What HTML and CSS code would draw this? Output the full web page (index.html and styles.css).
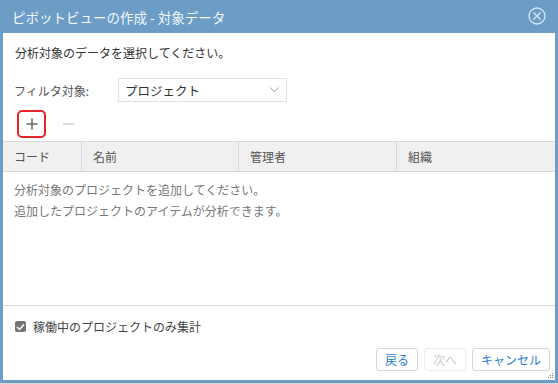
FILE: index.html
```html
<!DOCTYPE html>
<html lang="ja">
<head>
  <meta charset="UTF-8" />
  <meta name="viewport" content="width=device-width, initial-scale=1.0"/>
  <title>ピボットビューの作成</title>
  <link rel="stylesheet" href="styles.css">
</head>
<body>
  <div class="dialog">
    <div class="dialog-title">
      <span>ピボットビューの作成 - 対象データ</span>
      <svg class="close-icon" width="18" height="18" viewBox="0 0 18 18">
        <circle cx="9" cy="9" r="8" fill="none" stroke="#dfe9f3" stroke-width="1.3"/>
        <path d="M5.5 5.5 L12.5 12.5 M12.5 5.5 L5.5 12.5" stroke="#dfe9f3" stroke-width="1.3"/>
      </svg>
    </div>
    <div class="dialog-body">
      <p class="intro">分析対象のデータを選択してください。</p>
      <div class="filter-row">
        <label class="filter-label">フィルタ対象:</label>
        <div class="select">
          <span>プロジェクト</span>
          <svg width="9" height="6" viewBox="0 0 9 6">
            <path d="M0.5 0.5 L4.5 5 L8.5 0.5" fill="none" stroke="#a0a0a0" stroke-width="1"/>
          </svg>
        </div>
      </div>
      <div class="toolbar">
        <div class="icon-btn add-btn">
          <svg width="12" height="12" viewBox="0 0 12 12">
            <path d="M6 0.5 V11.5 M0.5 6 H11.5" stroke="#666" stroke-width="1.5"/>
          </svg>
        </div>
        <div class="icon-btn">
          <svg width="11" height="12" viewBox="0 0 11 12">
            <path d="M0 6 H11" stroke="#cfcfcf" stroke-width="1.5"/>
          </svg>
        </div>
      </div>
      <div class="grid">
        <div class="grid-head">
          <div class="col col-code">コード</div>
          <div class="col">名前</div>
          <div class="col">管理者</div>
          <div class="col">組織</div>
        </div>
        <div class="grid-empty">
          分析対象のプロジェクトを追加してください。<br>
          追加したプロジェクトのアイテムが分析できます。
        </div>
      </div>
      <div class="footer">
        <label class="check-row">
          <span class="checkbox">
            <svg width="9" height="8" viewBox="0 0 9 8">
              <path d="M1 4 L3.5 6.5 L8 1.5" fill="none" stroke="#fff" stroke-width="1.5"/>
            </svg>
          </span>
          稼働中のプロジェクトのみ集計
        </label>
        <div class="actions">
          <button class="btn">戻る</button>
          <button class="btn" disabled>次へ</button>
          <button class="btn">キャンセル</button>
        </div>
      </div>
      <svg class="grip" width="6" height="6" viewBox="0 0 6 6">
        <rect x="4" y="0" width="1" height="1" fill="#777"/>
        <rect x="2" y="2" width="1" height="1" fill="#777"/>
        <rect x="4" y="2" width="1" height="1" fill="#777"/>
        <rect x="0" y="4" width="1" height="1" fill="#777"/>
        <rect x="2" y="4" width="1" height="1" fill="#777"/>
        <rect x="4" y="4" width="1" height="1" fill="#777"/>
      </svg>
    </div>
  </div>
</body>
</html>
```

FILE: styles.css
```css
html, body {
  margin: 0;
  padding: 0;
  background: #d9d9d9;
  font-family: "Noto Sans CJK JP", "DejaVu Sans", sans-serif;
  font-size: 12px;
  color: #333;
}
.dialog {
  width: 558px;
  height: 383px;
  box-sizing: border-box;
  background: #6b9dc6;
  padding: 0 3px 3px 3px;
  display: flex;
  flex-direction: column;
}
.dialog-title {
  height: 33px;
  display: flex;
  align-items: center;
  justify-content: space-between;
  padding: 0 9px 0 9px;
  color: #f5f8fb;
  font-size: 13.5px;
}
.close-icon {
  margin-top: -1px;
}
.dialog-body {
  flex: 1;
  background: #fff;
  display: flex;
  flex-direction: column;
  position: relative;
}
.intro {
  margin: 0;
  padding: 11px 12px 0 12px;
  line-height: 18px;
}
.filter-row {
  display: flex;
  align-items: center;
  margin-top: 16px;
  padding-left: 11px;
}
.filter-label {
  width: 104px;
  color: #555;
}
.select {
  width: 169px;
  height: 24px;
  box-sizing: border-box;
  border: 1px solid #e2e2e2;
  display: flex;
  align-items: center;
  justify-content: space-between;
  padding: 0 7px 0 6px;
  font-size: 12.5px;
  color: #333;
}
.toolbar {
  display: flex;
  align-items: center;
  gap: 8px;
  margin-top: 8px;
  padding-left: 14px;
}
.icon-btn {
  width: 29px;
  height: 28px;
  box-sizing: border-box;
  display: flex;
  align-items: center;
  justify-content: center;
}
.add-btn {
  border: 2px solid #e8252b;
  border-radius: 5px;
}
.grid {
  margin-top: 3px;
  flex: 1;
  border-top: 1px solid #d9d9d9;
  border-bottom: 1px solid #d9d9d9;
  display: flex;
  flex-direction: column;
}
.grid-head {
  display: grid;
  grid-template-columns: 78px 157px 158px 1fr;
  height: 29px;
  background: #f0f0f0;
  border-bottom: 1px solid #d9d9d9;
  color: #555;
}
.col {
  display: flex;
  align-items: center;
  padding-left: 11px;
  border-left: 1px solid #d9d9d9;
}
.col-code {
  border-left: none;
}
.grid-empty {
  padding: 7px 11px 0 11px;
  line-height: 21px;
  color: #777;
}
.footer {
  height: 74px;
  box-sizing: border-box;
  padding-bottom: 9px;
  display: flex;
  flex-direction: column;
  justify-content: space-between;
}
.check-row {
  display: flex;
  align-items: center;
  gap: 7px;
  margin-top: 12px;
  padding-left: 12px;
  color: #444;
}
.checkbox {
  width: 11px;
  height: 11px;
  border-radius: 2px;
  background: #757575;
  display: flex;
  align-items: center;
  justify-content: center;
}
.actions {
  display: flex;
  justify-content: flex-end;
  gap: 6px;
  padding-right: 5px;
}
.btn {
  height: 23px;
  padding: 0 8px;
  border: 1px solid #d6d6d6;
  border-radius: 3px;
  background: #fff;
  color: #2a7dd0;
  font-family: inherit;
  font-size: 12px;
}
.btn:disabled {
  color: #cdcdcd;
  border-color: #ececec;
}
.grip {
  position: absolute;
  right: 1px;
  bottom: 1px;
}
```
